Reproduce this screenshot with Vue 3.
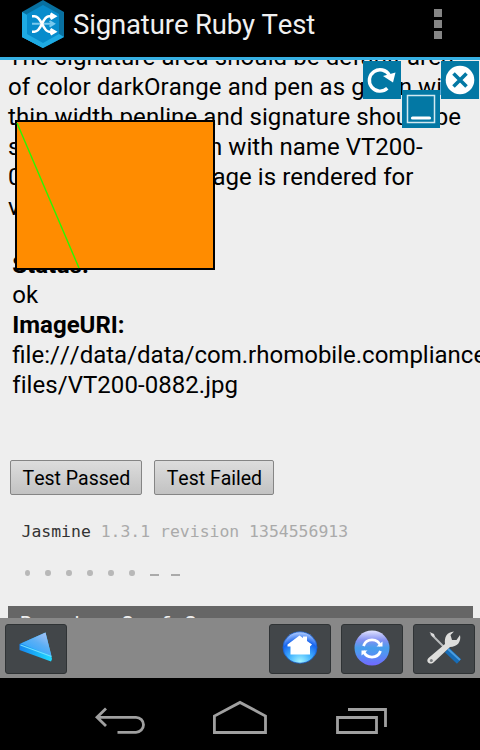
<script setup>
const description = [
  { text: 'The signature area should be default area', cls: 'l1' },
  { text: 'of color darkOrange and pen as green with', cls: 'l2' },
  { text: 'thin width penline and signature should be', cls: 'l3' },
  { text: 'saved on the screen with name VT200-', cls: 'l4' },
  { text: '0882.jpg and an image is rendered for', cls: 'l5' },
  { text: 'vt200.', cls: 'l6' },
]
const results = ['•', '•', '•', '•', '•', '•', '–', '–']
</script>

<template>
  <div class="screen">
    <header class="header">
      <svg class="logo" width="44" height="50" viewBox="0 0 44 50">
        <path d="M22 0 43 12V37L22 48 1 37V12Z" fill="#0870a0" />
        <path d="M1 12 22 24V48L1 37Z" fill="#1eaae3" />
        <path d="M22 24 43 37 22 48 1 37Z" fill="#1eaae3" />
        <path d="M22 5 38 14V34L22 43 6 34V14Z" fill="#078ccc" />
        <path d="M11 23.800H32M28.500 21l4.500 2.800-4.500 2.800" fill="none" stroke="#79c9ee" stroke-width="2" />
        <path d="M11 16.200h2.500c3.500 0 5.500 3.500 7.500 7.600s4 7.900 7 7.900h5M11 31.700h2.500c3.500 0 5.500-3.500 7.500-7.900s4-7.600 7-7.600h5M29.500 13.500l4.500 2.700-4.500 2.700M29.500 29l4.500 2.700-4.500 2.700" fill="none" stroke="#fff" stroke-width="2.600" />
      </svg>
      <h1 class="title">Signature Ruby Test</h1>
      <div class="overflow"><i></i><i></i><i></i></div>
    </header>

    <main class="content">
      <div class="description">
        <div v-for="line in description" :key="line.cls"><span :class="line.cls">{{ line.text }}</span></div>
      </div>
      <div class="status">
        <div><b class="st">Status:</b></div>
        <div>ok</div>
        <div><b class="iu">ImageURI:</b></div>
        <div><span class="u1">file:///data/data/com.rhomobile.compliance</span></div>
        <div><span class="u2">files/VT200-0882.jpg</span></div>
      </div>
      <div class="actions">
        <button class="passed"><span>Test Passed</span></button>
        <button class="failed"><span>Test Failed</span></button>
      </div>
      <div class="jasmine"><b>Jasmine</b> 1.3.1 revision 1354556913</div>
      <div class="results"><span v-for="(r, i) in results" :key="i" :class="r === '•' ? 'dot' : 'dash'"></span></div>
      <div class="running">Running 8 of 8 specs</div>

      <svg class="signature" width="200" height="150" viewBox="0 0 200 150">
        <rect x="1" y="1" width="198" height="148" fill="#ff8c00" stroke="#000" stroke-width="2" />
        <path d="M2 3 64 148" stroke="#28f800" stroke-width="1.400" />
      </svg>
      <svg class="tool refresh" width="38" height="38" viewBox="0 0 38 38">
        <rect width="38" height="38" fill="#0378a4" />
        <path d="M24.300 27.300A10.700 10.700 0 1 1 26.300 14" fill="none" stroke="#fff" stroke-width="3.400" />
        <path d="M20 15 32.500 11.500 30 21.500Z" fill="#fff" />
      </svg>
      <svg class="tool minimize" width="38" height="38" viewBox="0 0 38 38">
        <rect width="38" height="38" fill="#0378a4" />
        <rect x="5.500" y="5.500" width="27" height="27" fill="none" stroke="#d2e9f1" stroke-width="1.500" />
        <path d="M10.500 28H27.500" stroke="#fff" stroke-width="3.200" stroke-linecap="round" />
      </svg>
      <svg class="tool close" width="38" height="38" viewBox="0 0 38 38">
        <rect width="38" height="38" fill="#0378a4" />
        <circle cx="19" cy="19" r="14.300" fill="#fff" />
        <path d="M12.500 12.500 25.500 25.500M25.500 12.500 12.500 25.500" stroke="#0378a4" stroke-width="3.600" />
      </svg>
    </main>

    <div class="toolbar">
      <button class="tile">
        <svg width="60" height="48" viewBox="0 0 60 48">
          <defs>
            <linearGradient id="tri" x1="1" y1="0" x2="0.300" y2="1"><stop offset="0" stop-color="#b7c5f4" /><stop offset="0.500" stop-color="#5caff5" /><stop offset="1" stop-color="#24a4ff" /></linearGradient>
            <linearGradient id="edge" x1="0" y1="0" x2="1" y2="0"><stop offset="0" stop-color="#1684ef" /><stop offset="1" stop-color="#1fdcff" /></linearGradient>
          </defs>
          <path d="M13.500 19 39.500 7.500 46 34 45 36.500 13.500 25Z" fill="url(#edge)" />
          <path d="M15 18.500 39.500 7.500 45.500 31Z" fill="url(#tri)" />
          <path d="M14.500 20 45.500 31.500" stroke="#72dcff" stroke-width="1.200" />
        </svg>
      </button>
      <span class="grow"></span>
      <button class="tile">
        <svg width="60" height="48" viewBox="0 0 60 48">
          <defs><radialGradient id="home" cx="0.500" cy="0.950" r="0.950"><stop offset="0" stop-color="#a4f4ff" /><stop offset="0.350" stop-color="#44b5ff" /><stop offset="0.700" stop-color="#1765ef" /><stop offset="1" stop-color="#b8d1ff" /></radialGradient></defs>
          <ellipse cx="30" cy="22.500" rx="17" ry="15.700" fill="url(#home)" stroke="#1961ce" stroke-width="0.800" />
          <path d="M17.500 19.500 29.500 10.500 33 13V11.500H37V16L42 19.500 40 21.500V29.500H20.500V21.500H17.500Z" fill="#fff" />
        </svg>
      </button>
      <button class="tile">
        <svg width="60" height="48" viewBox="0 0 60 48">
          <defs><linearGradient id="sync" x1="0" y1="0" x2="0" y2="1"><stop offset="0" stop-color="#e3e4ff" /><stop offset="0.280" stop-color="#8390f2" /><stop offset="0.500" stop-color="#469eec" /><stop offset="0.650" stop-color="#5195f2" /><stop offset="1" stop-color="#7268ff" /></linearGradient></defs>
          <circle cx="30" cy="23" r="17.500" fill="url(#sync)" />
          <path d="M21.500 21a9 9 0 0 1 17 0M38.500 26a9 9 0 0 1-17 0" fill="none" stroke="#fff" stroke-width="2.800" />
          <path d="M34.500 21.500H40.500V16.500ZM25.500 25.500H19.500V30.500Z" fill="#fff" />
        </svg>
      </button>
      <button class="tile">
        <svg width="60" height="48" viewBox="0 0 60 48">
          <path d="M17 9 31 23" stroke="#b9bcbd" stroke-width="2" />
          <path d="M15.500 7 20 9 21 12 18.500 11.500Z" fill="#dcdcdc" />
          <path d="M33 25 45 36.500" stroke="#176db8" stroke-width="6" />
          <path d="M34 24 46 35" stroke="#4b9de0" stroke-width="1.800" />
          <path d="M14.500 33 31 19C30 12 33 7 40 6.500L36.500 10 38 15 42.500 15 46 10C47.500 17 43 22 36 22L20 37C16 41 11 36.500 14.500 33Z" fill="#dededc" />
          <circle cx="17.300" cy="35.500" r="1.500" fill="#777b7d" />
        </svg>
      </button>
    </div>

    <nav class="nav">
      <svg width="480" height="72" viewBox="0 0 480 72" fill="none" stroke="#a0a0a0" stroke-width="2.800">
        <path d="M106 30.500 97 39.300 106 48M97 39.300H136a7.500 7.500 0 0 1 0 15H117.500" />
        <path d="M214.400 54.500V38L240 24.400 265.500 38V54.500Z" />
        <path d="M337.500 39.500H376.500V54.500H337.500ZM348 31.500H385.500V49" />
      </svg>
    </nav>
  </div>
</template>

<style>
body { margin: 0; }
</style>
<style scoped>
.screen { width: 480px; height: 750px; display: flex; flex-direction: column; overflow: hidden; background: #000; font-family: Roboto, sans-serif; font-kerning: none; }
.header { height: 57px; flex: none; display: flex; align-items: flex-start; background: #000; border-bottom: 3px solid #36b0e2; }
.logo { margin-left: 20.500px; }
.title { margin: 0 0 0 8.500px; color: #f0f0f0; font-size: 27.500px; letter-spacing: -0.150px; font-weight: 400; line-height: 50px; white-space: nowrap; }
.overflow { display: flex; flex-direction: column; gap: 3px; margin: 9px 38px 0 auto; }
.overflow i { width: 8px; height: 8px; background: #858585; }
.content { position: relative; height: 558px; flex: none; overflow: hidden; background: #eee; color: #000; font-size: 24px; line-height: 30px; white-space: nowrap; }
.description { margin-top: -18px; padding-left: 8px; height: 210px; }
.l1, .l2, .l3 { letter-spacing: 0.090px; }
.l4, .l5 { letter-spacing: 0.035px; }
.u2 { letter-spacing: 0.050px; }
.status { padding-left: 12.300px; margin-top: -2px; }
.actions { display: flex; gap: 12px; padding: 60px 0 0 10.400px; }
.actions button { height: 35px; padding: 2px 0 0; border: 1.500px solid #858585; border-radius: 2px; background: linear-gradient(#dddddd, #c2c2c2); font: 19.500px Roboto, sans-serif; font-kerning: none; color: #000; }
.passed { width: 132px; }
.failed { width: 120px; }
.jasmine { margin: 22px 0 0 21.500px; font: 16.450px/30px "DejaVu Sans Mono", monospace; color: #aaa; }
.jasmine b { font-weight: 400; color: #333; }
.results { display: flex; gap: 12.800px; margin: 18px 0 0 24.500px; height: 16px; align-items: center; }
.dot { width: 5.500px; height: 6.500px; border-radius: 50%; background: #b8b8b8; margin-right: 2.700px; }
.dash { width: 8.200px; height: 2px; background: #aaa; margin-top: 4px; }
.running { margin: 25px 7.500px 0; height: 40px; padding-left: 12.500px; background: #666; color: #eee; font: 21px/38px "DejaVu Sans Mono", monospace; }
.signature { position: absolute; left: 15px; top: 60px; }
.tool { position: absolute; }
.refresh { left: 363px; top: 1px; }
.minimize { left: 402px; top: 30px; }
.close { left: 441px; top: 1px; }
.toolbar { height: 60px; flex: none; box-sizing: border-box; display: flex; gap: 10px; padding: 6px 5px 4px; background: #888; }
.grow { flex: 1; }
.tile { width: 62px; height: 50px; box-sizing: border-box; padding: 0; border: 1px solid #2f3335; border-radius: 3px; background: #424649; }
.tile svg { display: block; }
.nav { height: 72px; flex: none; background: #000; }
.nav svg { display: block; }
</style>
